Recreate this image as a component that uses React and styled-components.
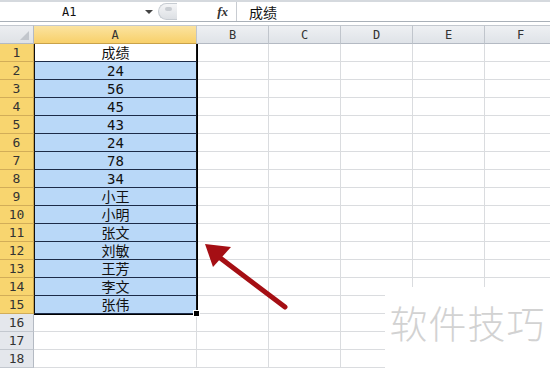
import React from 'react';
import styled, { createGlobalStyle } from 'styled-components';

const GlobalStyle = createGlobalStyle`
  html, body {
    margin: 0;
    padding: 0;
    background: #fff;
  }
  body {
    font-family: "Liberation Sans", "Noto Sans CJK SC", sans-serif;
  }
`;

const COLS = ['A', 'B', 'C', 'D', 'E', 'F'];
const DATA = [
  '成绩', '24', '56', '45', '43', '24', '78', '34',
  '小王', '小明', '张文', '刘敏', '王芳', '李文', '张伟',
];
const ROW_COUNT = 18;
const MONO = '"DejaVu Sans Mono", "Liberation Mono", monospace';

const Page = styled.div`
  width: 550px;
  height: 370px;
  overflow: hidden;
  background: #fff;
  display: flex;
  flex-direction: column;
`;

const FormulaBar = styled.div`
  height: 19px;
  flex: none;
  display: flex;
  align-items: stretch;
  border-top: 2px solid #d5d9de;
  border-bottom: 1px solid #a9b0b8;
  margin-bottom: 3px;
`;

const NameBox = styled.div`
  width: 158px;
  display: flex;
  align-items: center;
  position: relative;
  font-family: ${MONO};
  font-size: 12px;
  color: #111;
  padding-left: 62px;
  box-sizing: border-box;
`;

const Caret = styled.span`
  position: absolute;
  right: 5px;
  top: 8px;
  width: 0;
  height: 0;
  border-left: 4px solid transparent;
  border-right: 4px solid transparent;
  border-top: 4px solid #444;
`;

const Grip = styled.div`
  width: 18px;
  margin: 1px 0;
  border-radius: 9px 0 0 9px;
  border: 1px solid #c7ccd2;
  border-right: none;
  background: linear-gradient(#f4f5f7, #dde0e4);
  position: relative;
  &::after {
    content: '';
    position: absolute;
    left: 6px;
    top: 3px;
    width: 7px;
    height: 4px;
    border-radius: 4px;
    background: #c9cdd2;
  }
`;

const FxButton = styled.div`
  width: 60px;
  display: flex;
  align-items: center;
  justify-content: flex-end;
  padding-right: 8px;
  box-sizing: border-box;
  border-right: 1px solid #c8ccd2;
  font-family: "Liberation Serif", serif;
  font-style: italic;
  font-weight: bold;
  font-size: 13px;
  color: #333;
`;

const FormulaInput = styled.div`
  flex: 1;
  display: flex;
  align-items: center;
  padding-left: 12px;
  font-family: "Noto Sans CJK SC", sans-serif;
  font-size: 14px;
  color: #111;
`;

const Sheet = styled.div`
  position: relative;
  flex: 1;
`;

const Grid = styled.div`
  display: grid;
  grid-template-columns: 34px 163px repeat(5, 72px);
  grid-template-rows: 19px repeat(${ROW_COUNT}, 18px);
`;

const Corner = styled.div`
  box-sizing: border-box;
  border-top: 1px solid #c3c8cf;
  border-bottom: 1px solid #b4bac3;
  border-right: 1px solid #b4bac3;
  background: linear-gradient(#eceef1, #dfe2e6);
  position: relative;
  &::after {
    content: '';
    position: absolute;
    right: 4px;
    bottom: 3px;
    border-left: 9px solid transparent;
    border-bottom: 9px solid #c2c6cc;
  }
`;

const ColHead = styled.div`
  box-sizing: border-box;
  border-top: 1px solid #c3c8cf;
  border-bottom: 1px solid ${(p) => (p.$active ? '#c9a24a' : '#b4bac3')};
  border-right: 1px solid #c0c5cc;
  background: ${(p) => (p.$active
    ? 'linear-gradient(#fbe3a0, #f8d06a)'
    : 'linear-gradient(#eef0f3, #dfe3e8)')};
  display: flex;
  align-items: center;
  justify-content: center;
  font-family: ${MONO};
  font-size: 12px;
  color: #333;
`;

const RowHead = styled.div`
  box-sizing: border-box;
  border-bottom: 1px solid ${(p) => (p.$active ? '#d2ad58' : '#c3c8cf')};
  border-right: 1px solid ${(p) => (p.$active ? '#c9a24a' : '#b4bac3')};
  background: ${(p) => (p.$active ? '#f8d56f' : '#e4e7ec')};
  display: flex;
  align-items: center;
  justify-content: center;
  font-family: ${MONO};
  font-size: 13px;
  color: #333;
`;

const Cell = styled.div`
  box-sizing: border-box;
  border-bottom: 1px solid ${(p) => (p.$filled ? '#1c2b48' : '#dadcdf')};
  border-right: 1px solid ${(p) => (p.$filled ? '#111' : '#dadcdf')};
  border-left: ${(p) => (p.$filled ? '1px solid #111' : 'none')};
  background: ${(p) => (p.$filled && !p.$current ? '#b9d8f8' : '#fff')};
  display: flex;
  align-items: center;
  justify-content: center;
  font-family: ${MONO}, "Noto Sans CJK SC";
  font-size: 14px;
  color: #111;
  line-height: 1;
`;

const SelectionFrame = styled.div`
  position: absolute;
  left: 34px;
  top: 19px;
  width: 164px;
  height: 271px;
  box-sizing: border-box;
  border-right: 1px solid #000;
  border-bottom: 1px solid #000;
  pointer-events: none;
`;

const FillHandle = styled.div`
  position: absolute;
  right: -3px;
  bottom: -3px;
  width: 5px;
  height: 5px;
  background: #000;
  border: 1px solid #fff;
`;

const ArrowLayer = styled.svg`
  position: absolute;
  left: 0;
  top: 0;
  pointer-events: none;
`;

const Watermark = styled.div`
  position: absolute;
  right: 0;
  bottom: 0;
  width: 165px;
  height: 83px;
  box-sizing: border-box;
  padding-bottom: 14px;
  background: #fff;
  display: flex;
  align-items: center;
  justify-content: center;
  font-family: "Noto Sans CJK SC", sans-serif;
  font-weight: 300;
  font-size: 38px;
  letter-spacing: 1px;
  color: #d2d2d2;
`;

function App() {
  const rows = Array.from({ length: ROW_COUNT }, (_, i) => i + 1);
  return (
    <Page>
      <GlobalStyle />
      <FormulaBar>
        <NameBox>
          A1
          <Caret />
        </NameBox>
        <Grip />
        <FxButton>fx</FxButton>
        <FormulaInput>成绩</FormulaInput>
      </FormulaBar>
      <Sheet>
        <Grid>
          <Corner />
          {COLS.map((c) => (
            <ColHead key={c} $active={c === 'A'}>{c}</ColHead>
          ))}
          {rows.map((r) => (
            <React.Fragment key={r}>
              <RowHead $active={r <= DATA.length}>{r}</RowHead>
              {COLS.map((c) => {
                const filled = c === 'A' && r <= DATA.length;
                return (
                  <Cell key={c} $filled={filled} $current={filled && r === 1}>
                    {filled ? DATA[r - 1] : ''}
                  </Cell>
                );
              })}
            </React.Fragment>
          ))}
        </Grid>
        <SelectionFrame>
          <FillHandle />
        </SelectionFrame>
        <ArrowLayer width="550" height="350" viewBox="0 0 550 350">
          <line x1="285" y1="282" x2="211" y2="226" stroke="#a50f14" strokeWidth="5" strokeLinecap="round" />
          <polygon points="205,219 231,222 213,242" fill="#a50f14" />
        </ArrowLayer>
        <Watermark>软件技巧</Watermark>
      </Sheet>
    </Page>
  );
}

export default App;
